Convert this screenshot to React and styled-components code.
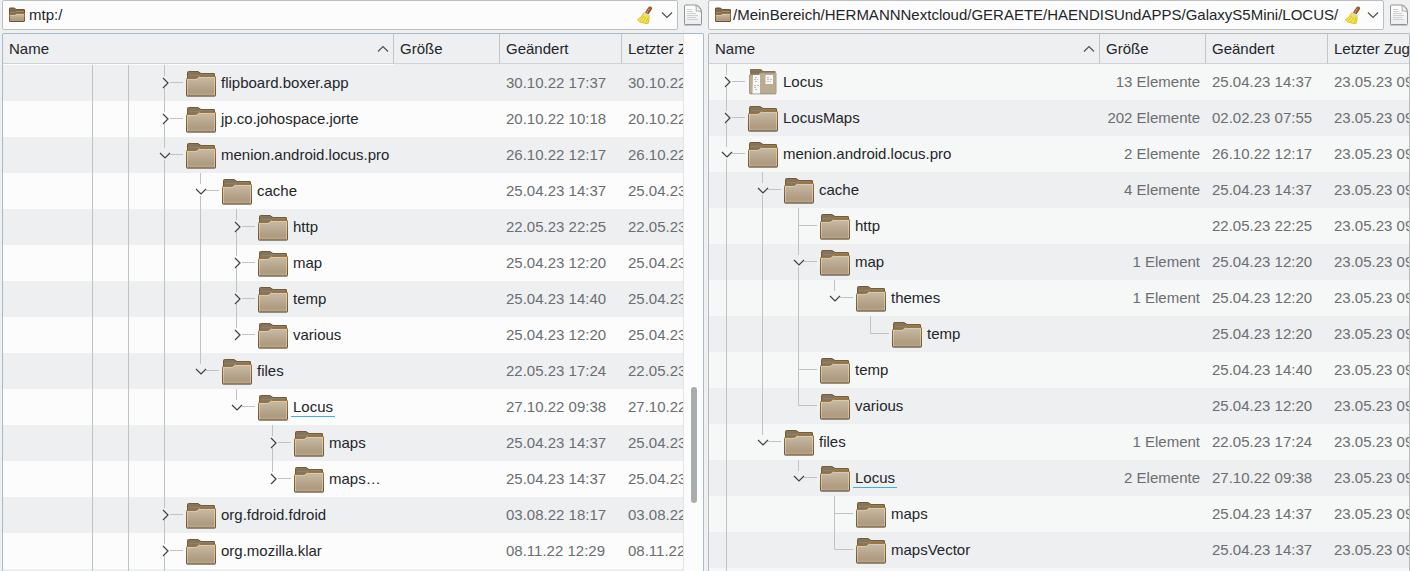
import React from "react";
import styled, { createGlobalStyle } from "styled-components";

const leftRows = [
  { name: "flipboard.boxer.app", guides: "..||t", arrow: "right", changed: "30.10.22 17:37", accessed: "30.10.22 17:37" },
  { name: "jp.co.johospace.jorte", guides: "..||t", arrow: "right", changed: "20.10.22 10:18", accessed: "20.10.22 10:18" },
  { name: "menion.android.locus.pro", guides: "..||t", arrow: "down", changed: "26.10.22 12:17", accessed: "26.10.22 12:17" },
  { name: "cache", guides: "..|||t", arrow: "down", changed: "25.04.23 14:37", accessed: "25.04.23 14:37" },
  { name: "http", guides: "..||||t", arrow: "right", changed: "22.05.23 22:25", accessed: "22.05.23 22:25" },
  { name: "map", guides: "..||||t", arrow: "right", changed: "25.04.23 12:20", accessed: "25.04.23 12:20" },
  { name: "temp", guides: "..||||t", arrow: "right", changed: "25.04.23 14:40", accessed: "25.04.23 14:40" },
  { name: "various", guides: "..||||l", arrow: "right", changed: "25.04.23 12:20", accessed: "25.04.23 12:20" },
  { name: "files", guides: "..|||l", arrow: "down", changed: "22.05.23 17:24", accessed: "22.05.23 17:24" },
  { name: "Locus", guides: "..|||.l", arrow: "down", changed: "27.10.22 09:38", accessed: "27.10.22 09:38", current: true },
  { name: "maps", guides: "..|||..t", arrow: "right", changed: "25.04.23 14:37", accessed: "25.04.23 14:37" },
  { name: "maps…", guides: "..|||..l", arrow: "right", changed: "25.04.23 14:37", accessed: "25.04.23 14:37" },
  { name: "org.fdroid.fdroid", guides: "..||t", arrow: "right", changed: "03.08.22 18:17", accessed: "03.08.22 18:17" },
  { name: "org.mozilla.klar", guides: "..||t", arrow: "right", changed: "08.11.22 12:29", accessed: "08.11.22 12:29" },
];

const rightRows = [
  { name: "Locus", guides: "t", arrow: "right", size: "13 Elemente", changed: "25.04.23 14:37", preview: true },
  { name: "LocusMaps", guides: "t", arrow: "right", size: "202 Elemente", changed: "02.02.23 07:55" },
  { name: "menion.android.locus.pro", guides: "t", arrow: "down", size: "2 Elemente", changed: "26.10.22 12:17" },
  { name: "cache", guides: "|t", arrow: "down", size: "4 Elemente", changed: "25.04.23 14:37" },
  { name: "http", guides: "||t", changed: "22.05.23 22:25" },
  { name: "map", guides: "||t", arrow: "down", size: "1 Element", changed: "25.04.23 12:20" },
  { name: "themes", guides: "|||l", arrow: "down", size: "1 Element", changed: "25.04.23 12:20" },
  { name: "temp", guides: "|||.l", changed: "25.04.23 12:20" },
  { name: "temp", guides: "||t", changed: "25.04.23 14:40" },
  { name: "various", guides: "||l", changed: "25.04.23 12:20" },
  { name: "files", guides: "|l", arrow: "down", size: "1 Element", changed: "22.05.23 17:24" },
  { name: "Locus", guides: "|.l", arrow: "down", size: "2 Elemente", changed: "27.10.22 09:38", current: true },
  { name: "maps", guides: "|..t", changed: "25.04.23 14:37" },
  { name: "mapsVector", guides: "|..l", changed: "25.04.23 14:37" },
].map((row) => ({ ...row, accessed: "23.05.23 09:38" }));

const Gradients = () => (
  <Defs aria-hidden="true">
    <defs>
      <linearGradient id="front" x1="0" y1="0" x2="0" y2="1">
        <stop offset="0" stopColor="#c8bca7" />
        <stop offset="0.8" stopColor="#ae9a7f" />
        <stop offset="1" stopColor="#b9a78d" />
      </linearGradient>
      <linearGradient id="edge" x1="0" y1="0" x2="0" y2="1">
        <stop offset="0" stopColor="#a8752e" />
        <stop offset="1" stopColor="#6b5130" />
      </linearGradient>
      <linearGradient id="paper" x1="0" y1="0" x2="0" y2="1">
        <stop offset="0" stopColor="#ffffff" />
        <stop offset="1" stopColor="#ececec" />
      </linearGradient>
    </defs>
  </Defs>
);

const FolderIcon = () => (
  <svg width="32" height="32" viewBox="0 0 32 32" aria-hidden="true">
    <path d="M1.5 29.5h29" stroke="#000" strokeOpacity="0.18" />
    <path d="M2.500 13V5.500q0-1 1-1h9.500l3 2h13q.5 0 .5.500V13z" fill="#85755d" stroke="#765a33" />
    <path d="M4 8.500h10l2-1h12" fill="none" stroke="#9d8d74" strokeOpacity="0.5" />
    <path
      d="M1.500 12.500q0-1 .5-1h8.500q1.500 0 2.500-1.500t2-.5h15q.5 0 .5.500v18q0 1-1 1h-27q-1 0-1-1z"
      fill="url(#front)"
      stroke="url(#edge)"
    />
    <path d="M2.500 28V12.500H11q1.500 0 2.500-1.500t2-.5h14V28" fill="none" stroke="#e6ddcd" strokeOpacity="0.5" />
  </svg>
);

const PreviewFolderIcon = () => (
  <svg width="32" height="32" viewBox="0 0 32 32" aria-hidden="true">
    <path d="M3 28.500h26" stroke="#000" strokeOpacity="0.15" />
    <path d="M3 12V3.500q0-.500.500-.500H14l2 2h12q.5 0 .5.500V12z" fill="#83735c" />
    <path d="M2.500 9H11l2.500-2H29v20.500H2.500z" fill="#bbab93" stroke="#a89a84" />
    <path d="M6 9h7v18.500H5.500z" fill="#f6f6f4" />
    <path d="M18.500 9h7.500v9h-7.500z" fill="#f6f6f4" />
    <path
      d="M8 11.500h3M7 13.500h4M8 15.500h3M7 19.500h5M7 21.500h3M8 23.500h3M20 11.500h3M20 13.500h5M20 15.500h4"
      stroke="#bcbcbc"
      strokeDasharray="2 1"
    />
  </svg>
);

const SmallFolderIcon = () => (
  <svg width="16" height="16" viewBox="0 0 16 16" aria-hidden="true">
    <path d="M.5 8V1.500Q.5 1 1 1h4.500l1.500 1.500h8q.500 0 .500.500v5z" fill="#7d6b50" stroke="#6b5330" />
    <path d="M1 5.500h5l1-1h8" fill="none" stroke="#a6957a" strokeOpacity="0.7" />
    <path d="M.5 8q0-.5.500-.5h5l1.500-1H15q.500 0 .5.500v7q0 .500-.5.500H1q-.500 0-.500-.500z" fill="url(#front)" stroke="url(#edge)" />
    <path d="M1.500 8.500h5l1.500-1h6.500" fill="none" stroke="#e0d3bd" strokeOpacity="0.6" />
  </svg>
);

const BroomIcon = () => (
  <svg width="16" height="18" viewBox="0 0 16 18" aria-hidden="true">
    <path d="m10 7 3-4.500" stroke="#8e5222" strokeWidth="4" strokeLinecap="round" />
    <path d="m10 6.500 3-4.500" stroke="#dca468" strokeWidth="1.500" strokeDasharray="1.500 1" />
    <path d="M6.500 7 12 10Q12.500 14 11 17.500 7.500 17.500 5 16.500 2 16.500.500 13.500 4.500 12 6.500 7z" fill="#f3e552" stroke="#d9c22a" />
    <path d="M7 10q-1.500 3-4 4.500M8.500 11q-.5 3-3 5M10.500 11.500q0 3-1.500 5" fill="none" stroke="#cfb11a" strokeOpacity="0.7" />
    <path d="m6.500 6.500 6 3.500" stroke="#e2d6c2" strokeWidth="2" />
  </svg>
);

const DocumentIcon = () => (
  <svg width="20" height="22" viewBox="0 0 20 22" aria-hidden="true">
    <path d="M1 21h17.500" stroke="#000" strokeOpacity="0.35" />
    <path d="M2.500 1h10.500q5 1.500 5.500 6.500V19.500q0 1-1 1h-15q-1 0-1-1V2q0-1 1-1z" fill="url(#paper)" stroke="#929292" />
    <path d="M4 5.500h5M4 7.500h6M4 9.500h9M4 11.500h11M4 13.500h9M4 15.500h11" stroke="#cdcfd0" />
    <path d="M12.500 1.500q1.500 2 .5 5.500 3-.500 5 1-.500-5-5.500-6.500z" fill="#f4f4f4" stroke="#acacac" />
  </svg>
);

const ChevronDown = () => (
  <svg width="12" height="8" viewBox="0 0 12 8" aria-hidden="true">
    <path d="m1 1.500 5 5 5-5" fill="none" stroke="#4d5256" strokeWidth="1.200" />
  </svg>
);

const ChevronUp = () => (
  <svg width="12" height="8" viewBox="0 0 12 8" aria-hidden="true">
    <path d="m1 6.500 5-5 5 5" fill="none" stroke="#4d5256" strokeWidth="1.200" />
  </svg>
);

// "|" runs straight through, "t" has siblings below, "l" is the last child
const Guide = ({ kind, arrow }) => (
  <svg width="36" height="36" viewBox="0 0 36 36" aria-hidden="true">
    <g stroke="#c0c2c3" fill="none">
      {kind === "|" && <path d="M17.500 0v36" />}
      {kind !== "|" && kind !== "." && arrow && <path d="M17.500 0v11M23 17.500h13" />}
      {kind === "t" && arrow && <path d="M17.500 23v13" />}
      {kind === "t" && !arrow && <path d="M17.500 0v36M18 17.500h18" />}
      {kind === "l" && !arrow && <path d="M17.500 0v17.500h18.500" />}
    </g>
    {arrow === "right" && <path d="m16 13 5 5-5 5" fill="none" stroke="#3c4145" strokeWidth="1.200" />}
    {arrow === "down" && <path d="m13 16 5 5 5-5" fill="none" stroke="#3c4145" strokeWidth="1.200" />}
  </svg>
);

const FileTable = ({ rows, tail, light, first }) => (
  <Table>
    <colgroup>
      <Col $width={391} />
      <Col $width={106} />
      <Col $width={122} />
      <col />
    </colgroup>
    <thead>
      <tr>
        <HeadCell>
          <HeadLabel>
            Name
            <ChevronUp />
          </HeadLabel>
        </HeadCell>
        <HeadCell>Größe</HeadCell>
        <HeadCell>Geändert</HeadCell>
        <HeadCell>Letzter Zugriff</HeadCell>
      </tr>
    </thead>
    <Body $light={light} $first={first}>
      {rows.map((row, index) => (
        <tr key={index}>
          <NameCell>
            <Entry>
              {row.guides.split("").map((kind, level) => (
                <Guide key={level} kind={kind} arrow={level === row.guides.length - 1 ? row.arrow : undefined} />
              ))}
              <EntryIcon>{row.preview ? <PreviewFolderIcon /> : <FolderIcon />}</EntryIcon>
              <EntryLabel $current={row.current}>{row.name}</EntryLabel>
            </Entry>
          </NameCell>
          <InfoCell $right>{row.size}</InfoCell>
          <InfoCell>{row.changed}</InfoCell>
          <InfoCell>{row.accessed}</InfoCell>
        </tr>
      ))}
      <tr>
        <NameCell colSpan="4">
          <Entry>
            {tail.split("").map((kind, level) => (
              <Guide key={level} kind={kind} />
            ))}
          </Entry>
        </NameCell>
      </tr>
    </Body>
  </Table>
);

const Pane = ({ path, label, gap, focused, scrollable, children }) => (
  <PaneColumn>
    <Toolbar>
      <PathBox $gap={gap}>
        <SmallFolderIcon />
        <PathInput type="text" defaultValue={path} aria-label={label} />
        <IconButton type="button" aria-label="Eingabe löschen">
          <BroomIcon />
        </IconButton>
        <IconButton type="button" aria-label="Verlauf">
          <ChevronDown />
        </IconButton>
      </PathBox>
      <IconButton type="button" aria-label="Neues Dokument">
        <DocumentIcon />
      </IconButton>
    </Toolbar>
    <ListFrame $focused={focused}>
      <ListView>{children}</ListView>
      {scrollable && (
        <ScrollTrack>
          <ScrollThumb />
        </ScrollTrack>
      )}
    </ListFrame>
  </PaneColumn>
);

const App = () => {
  return (
    <>
      <GlobalStyle />
      <Gradients />
      <Window>
        <Pane path="mtp:/" label="Pfad links" gap={4} focused scrollable>
          <FileTable rows={leftRows} tail="..|||" light="#fcfcfc" first="dark" />
        </Pane>
        <Pane
          path="/MeinBereich/HERMANNNextcloud/GERAETE/HAENDISUndAPPS/GalaxyS5Mini/LOCUS/"
          label="Pfad rechts"
          gap={2}
        >
          <FileTable rows={rightRows} tail="|" light="#f6f8f7" first="light" />
        </Pane>
      </Window>
    </>
  );
};

const GlobalStyle = createGlobalStyle`
  * {
    box-sizing: border-box;
  }

  body {
    margin: 0;
    background: #eff0f1;
    color: #232629;
    font-family: "Liberation Sans", Arial, sans-serif;
    font-size: 15px;
    overflow: hidden;
  }

  svg {
    display: block;
    flex: none;
  }
`;

const Defs = styled.svg`
  width: 0;
  height: 0;
`;

const Window = styled.main`
  display: flex;
  gap: 4px;
  height: 100vh;
  padding-left: 2px;
`;

const PaneColumn = styled.section`
  display: flex;
  flex: 1;
  flex-direction: column;
  gap: 3px;
  min-width: 0;
`;

const Toolbar = styled.div`
  display: flex;
  align-items: center;
  gap: 5px;
  height: 30px;
  padding-right: 1px;
`;

const PathBox = styled.div`
  display: flex;
  flex: 1;
  align-items: center;
  gap: ${({ $gap }) => $gap}px;
  height: 30px;
  min-width: 0;
  padding: 0 4px 0 6px;
  border: 1px solid #bcbebf;
  border-radius: 2px;
  background: #fcfcfc;
`;

const PathInput = styled.input`
  flex: 1;
  min-width: 0;
  padding: 0 0 1px;
  border: none;
  outline: none;
  background: transparent;
  color: inherit;
  font: inherit;
`;

const IconButton = styled.button`
  display: flex;
  padding: 0;
  border: none;
  background: none;

  & + & {
    margin-left: 4px;
  }
`;

const ListFrame = styled.div`
  display: flex;
  flex: 1;
  min-height: 0;
  border: 1px solid ${({ $focused }) => ($focused ? "#a9bac6" : "#b9bcbe")};
  border-bottom: none;
  border-radius: 2px 2px 0 0;
`;

const ListView = styled.div`
  flex: 1;
  min-width: 0;
  overflow: hidden;
`;

const Table = styled.table`
  width: 100%;
  table-layout: fixed;
  border-collapse: separate;
  border-spacing: 0;
`;

const Col = styled.col`
  width: ${({ $width }) => $width}px;
`;

const HeadCell = styled.th`
  height: 30px;
  padding: 0 6px;
  overflow: hidden;
  border-right: 1px solid #c3c5c7;
  border-bottom: 1px solid #d0d2d3;
  background: #eeeff1;
  font-weight: normal;
  text-align: left;
  white-space: nowrap;

  &:last-child {
    padding-right: 0;
    border-right: none;
  }
`;

const HeadLabel = styled.div`
  display: flex;
  align-items: center;
  justify-content: space-between;
  margin-right: -2px;
`;

const Body = styled.tbody`
  &::before {
    content: "";
    display: ${({ $first }) => ($first === "dark" ? "block" : "none")};
    height: 1px;
    background: ${({ $light }) => $light};
  }

  tr {
    background: ${({ $light }) => $light};
  }

  tr:nth-child(${({ $first }) => ($first === "dark" ? "odd" : "even")}) {
    background: #eeeff1;
  }
`;

const NameCell = styled.td`
  height: 36px;
  padding: 0;
  overflow: hidden;
`;

const InfoCell = styled.td`
  padding: 0 6px 2px;
  overflow: hidden;
  color: #6b6e70;
  text-align: ${({ $right }) => ($right ? "right" : "left")};
  white-space: nowrap;

  &:last-child {
    padding-right: 0;
  }
`;

const Entry = styled.div`
  display: flex;
  align-items: center;
  height: 36px;
`;

const EntryIcon = styled.span`
  margin: 0 2px;
`;

const EntryLabel = styled.span`
  padding: 1px 2px 0;
  border-bottom: 1px solid ${({ $current }) => ($current ? "#3daee9" : "transparent")};
  line-height: 18px;
  white-space: nowrap;
`;

const ScrollTrack = styled.div`
  display: grid;
  grid-template-rows: 353fr 116fr 68fr;
  width: 20px;
  padding: 0 6px 0 7px;
  border-left: 1px solid #e3e4e5;
  background: #fcfcfc;
`;

const ScrollThumb = styled.div`
  grid-row: 2;
  border-radius: 3px;
  background: #a8adae;
`;

export default App;
